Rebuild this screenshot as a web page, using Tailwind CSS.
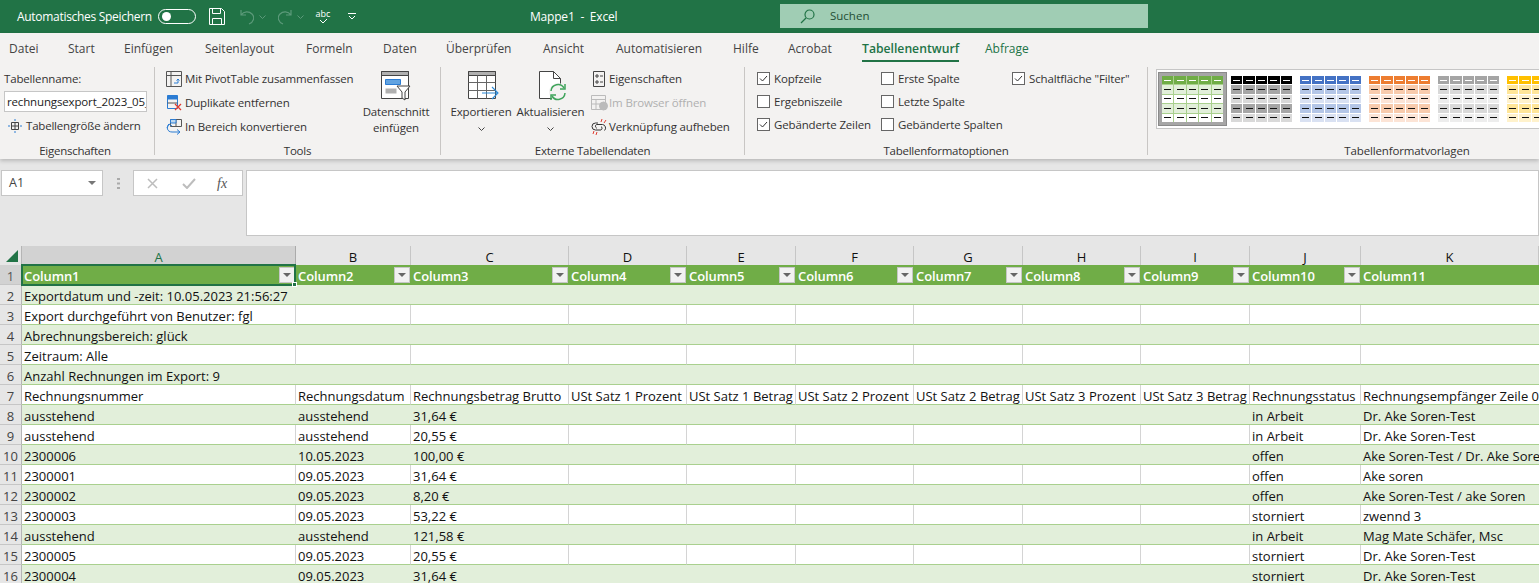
<!DOCTYPE html>
<html lang="de">
<head>
<meta charset="UTF-8">
<title>Mappe1 - Excel</title>
<script src="https://cdn.jsdelivr.net/npm/@tailwindcss/browser@4"></script>
</head>
<body class="w-[1539px] h-[583px] overflow-hidden bg-[#e6e6e6] font-['Open_Sans','Noto_Sans',sans-serif] text-[12px] text-[#333]">

<!-- title bar -->
<div class="h-[33px] bg-[#217346] flex items-center text-white relative">
  <span class="ml-[17px] w-[141px] text-[12px] tracking-[-0.3px]">Automatisches Speichern</span>
  <span class="w-[38px] h-[15px] rounded-full border border-white flex items-center pl-[3px]"><span class="w-[9px] h-[9px] rounded-full bg-white"></span></span>
  <svg class="ml-[13px]" width="16" height="17" viewBox="0 0 16 17" fill="none" stroke="#fff" stroke-width="1"><path d="M.5.5h12l3 3v13H.5zM3.5.5v5h8v-5M3.5 16.5v-6h9v6"/></svg>
  <svg class="ml-[15px]" width="14" height="16" viewBox="0 0 14 16" fill="none" stroke="#5c9a7a" stroke-width="1.2"><path d="M1 1v5h5M1 6c3-4 8-4 11-1s2 8-3 10"/></svg>
  <svg class="ml-[5px]" width="7" height="4" viewBox="0 0 7 4" fill="none" stroke="#5c9a7a"><path d="M.5.5l3 3 3-3"/></svg>
  <svg class="ml-[12px]" width="14" height="16" viewBox="0 0 14 16" fill="none" stroke="#5c9a7a" stroke-width="1.2"><path d="M13 1v5H8M13 6C10 2 5 2 2 5s-2 8 3 10"/></svg>
  <svg class="ml-[5px]" width="7" height="4" viewBox="0 0 7 4" fill="none" stroke="#5c9a7a"><path d="M.5.5l3 3 3-3"/></svg>
  <span class="ml-[11px] w-[16px] flex flex-col items-center leading-[9px] text-[9px]">abc<svg width="9" height="6" viewBox="0 0 9 6" fill="none" stroke="#fff"><path d="M1 2l3 3 4-4"/></svg></span>
  <svg class="ml-[17px]" width="8" height="7" viewBox="0 0 8 7" fill="none" stroke="#fff"><path d="M0 .5h8"/><path d="M1 3l3 3 3-3"/></svg>
  <span class="absolute left-[530px] top-[8px] text-[12px] tracking-[-0.2px]">Mappe1&nbsp; - &nbsp;Excel</span>
  <div class="absolute left-[780px] top-[4px] w-[368px] h-[24px] bg-[#a0cdb4] flex items-center text-[#1f4f35]">
    <svg class="ml-[20px]" width="15" height="15" viewBox="0 0 15 15" fill="none" stroke="#217346" stroke-width="1.2"><circle cx="9.5" cy="5.5" r="4.5"/><path d="M6 9L1 14"/></svg>
    <span class="ml-[15px] text-[11.5px]">Suchen</span>
  </div>
</div>

<!-- ribbon -->
<div class="bg-[#f3f2f1] h-[126px] shadow-[0_2px_4px_rgba(0,0,0,0.2)] relative">
  <div class="flex h-[32px] items-center text-[#444]">
    <span class="w-[68px] pl-[9px]">Datei</span>
    <span class="w-[56px]">Start</span>
    <span class="w-[81px]">Einfügen</span>
    <span class="w-[101px]">Seitenlayout</span>
    <span class="w-[77px]">Formeln</span>
    <span class="w-[63px]">Daten</span>
    <span class="w-[97px]">Überprüfen</span>
    <span class="w-[73px]">Ansicht</span>
    <span class="w-[117px]">Automatisieren</span>
    <span class="w-[55px]">Hilfe</span>
    <span class="w-[74px]">Acrobat</span>
    <span class="w-[123px] h-[32px] flex flex-col items-start justify-center relative"><span class="font-semibold text-[#217346] text-[12.2px]">Tabellenentwurf</span><span class="absolute left-0 top-[27px] w-[97px] h-[2px] bg-[#217346]"></span></span>
    <span class="text-[#217346]">Abfrage</span>
  </div>

  <div class="flex h-[93px] text-[11.5px] tracking-[-0.15px] whitespace-nowrap">
    <!-- Eigenschaften -->
    <div class="w-[155px] flex flex-col">
      <div class="h-[74px] mt-[2px] pl-[4px] border-r border-[#c8c6c4]">
        <div class="h-[24px] flex items-center">Tabellenname:</div>
        <div class="w-[143px] h-[21px] bg-white border border-[#c6c6c6] flex items-center pl-[2px] overflow-hidden text-[#222]">rechnungsexport_2023_05_</div>
        <div class="h-[27px] flex items-center pl-[4px]">
          <svg width="14" height="14" viewBox="0 0 14 14" fill="none" stroke="#444"><path d="M3.5 3.5h7v7h-7zM3.5 7h7M7 3.5v7"/><path d="M7 0v2M7 12v2M0 7h2M12 7h2" stroke="#2b7cd3"/></svg>
          <span class="ml-[4px] tracking-[-0.2px]">Tabellengröße ändern</span>
        </div>
      </div>
      <div class="flex-1 min-h-0 flex justify-center border-r border-[#c8c6c4] mb-[3px] leading-[15px] pt-[2px] pr-[4px] tracking-[-0.25px]">Eigenschaften</div>
    </div>
    <!-- Tools -->
    <div class="w-[286px] flex flex-col">
      <div class="h-[74px] mt-[2px] flex border-r border-[#c8c6c4]">
        <div class="w-[201px] pl-[11px]">
          <div class="h-[24px] flex items-center gap-[3px]">
            <svg width="16" height="16" viewBox="0 0 16 16" fill="none" stroke="#555"><path d="M.5.5h15v15H.5zM.5 4.5h15M5 .5v15"/><path d="M8 12h4V8M10.5 9.5L12 8l1.5 1.5" stroke="#2b7cd3"/></svg>
            <span>Mit PivotTable zusammenfassen</span>
          </div>
          <div class="h-[24px] flex items-center gap-[3px]">
            <svg width="16" height="16" viewBox="0 0 16 16" fill="none"><path d="M1.5.5h10v13h-10z" stroke="#2b7cd3"/><path d="M1.5.5h10v4h-10z" fill="#2b7cd3"/><path d="M1.5 8h10" stroke="#555"/><path d="M9 9l6 6M15 9l-6 6" stroke="#e03c31" stroke-width="1.3"/></svg>
            <span>Duplikate entfernen</span>
          </div>
          <div class="h-[24px] flex items-center gap-[3px]">
            <svg width="16" height="16" viewBox="0 0 16 16" fill="none"><path d="M4.5.5h11v7h-11zM10 .5v7" stroke="#555"/><path d="M4.5.5H10v3.500H4.500z" fill="#bcd6ee" stroke="#2b7cd3"/><path d="M3 5C0 8 1 13 6 13h8M11 10.500l3 2.500-3 2.500M1 9l2-4 3 2" stroke="#2b7cd3"/></svg>
            <span>In Bereich konvertieren</span>
          </div>
        </div>
        <div class="w-[80px] flex flex-col items-center pt-[4px]">
          <svg width="30" height="30" viewBox="0 0 30 30" fill="none"><path d="M.5.500h27v27H.5z" stroke="#444" fill="#fff"/><path d="M.5.500h27v4H.5z" fill="#b0b0b0" stroke="#444"/><path d="M4.500 8.500h15v5h-15z" fill="#62a3e0" stroke="#2b7cd3"/><path d="M4.500 17.500h11v5h-11z" fill="#b0b0b0"/><path d="M16 15h13l-5 6v8l-3-2v-6z" fill="#fff" stroke="#444"/></svg>
          <span class="mt-[3px] leading-[16px] text-center">Datenschnitt<br>einfügen</span>
        </div>
      </div>
      <div class="flex-1 min-h-0 flex justify-center border-r border-[#c8c6c4] mb-[3px] leading-[15px] pt-[2px] tracking-[-0.25px]">Tools</div>
    </div>
    <!-- Externe Tabellendaten -->
    <div class="w-[304px] flex flex-col">
      <div class="h-[74px] mt-[2px] flex border-r border-[#c8c6c4]">
        <div class="w-[74px] pl-[6px] flex flex-col items-center pt-[4px]">
          <svg class="ml-[4px]" width="31" height="30" viewBox="0 0 31 30" fill="none"><path d="M.5.500h27v27H.5z" stroke="#444" fill="#fff"/><path d="M.5.500h27v4H.5z" fill="#b0b0b0" stroke="#444"/><path d="M.5 11.500h27M.5 19.500h27M9.500 4.500v23M18.500 4.500v23" stroke="#666"/><path d="M14 22h15M24 16l6 6-6 6" stroke="#2b8ad8" stroke-width="1.1"/></svg>
          <span class="mt-[3px] leading-[16px]">Exportieren</span>
          <svg class="mt-[7px]" width="7" height="4" viewBox="0 0 7 4" fill="none" stroke="#444"><path d="M.5.500l3 3 3-3"/></svg>
        </div>
        <div class="w-[70px] flex flex-col items-center pt-[4px] pl-[1px]">
          <svg class="ml-[6px]" width="29" height="30" viewBox="0 0 29 30" fill="none"><path d="M.5.500h14l7 7v20H.5z" stroke="#444" fill="#fff"/><path d="M14.500.500v7h7" stroke="#444"/><circle cx="19" cy="21" r="9" fill="#f3f2f1"/><path d="M12 20a7 7 0 0 1 13-3M26 22a7 7 0 0 1-13 3" stroke="#3fa45b" stroke-width="1.500"/><path d="M26 13v5h-5M12 29v-5h5" stroke="#3fa45b" stroke-width="1.500"/></svg>
          <span class="mt-[3px] leading-[16px]">Aktualisieren</span>
          <svg class="mt-[7px]" width="7" height="4" viewBox="0 0 7 4" fill="none" stroke="#444"><path d="M.5.500l3 3 3-3"/></svg>
        </div>
        <div class="pl-[6px]">
          <div class="h-[24px] flex items-center"><svg class="ml-[2px]" width="12" height="16" viewBox="0 0 12 16" fill="none" stroke="#444"><path d="M.5.500h11v15H.5zM3 4h2v2H3zM3 10h2v2H3zM7 5h3M7 11h3"/></svg><span class="ml-[4px]">Eigenschaften</span></div>
          <div class="h-[24px] flex items-center text-[#b0b0b0]"><svg width="17" height="16" viewBox="0 0 17 16" fill="none" stroke="#bbb"><path d="M.5.500h14v14H.5zM.5 4.500h14M5 4.500v10M.5 9h9"/><circle cx="12.500" cy="11" r="4" fill="#bbb"/></svg><span class="ml-[1px]">Im Browser öffnen</span></div>
          <div class="h-[24px] flex items-center"><svg width="17" height="16" viewBox="0 0 17 16" fill="none"><path d="M7 4H4.500a3.500 3.500 0 0 0 0 7H10a2 2 0 0 0 0-3.500M6 9h-.5a2 2 0 0 1 0-3.500h6a3.500 3.500 0 0 1 2 6" stroke="#333"/><path d="M11 0l-1 3M15 1l-2 3M3 12l-1 3M6 13l-1 3" stroke="#e03c31"/></svg><span class="ml-[1px]">Verknüpfung aufheben</span></div>
        </div>
      </div>
      <div class="flex-1 min-h-0 flex justify-center border-r border-[#c8c6c4] mb-[3px] leading-[15px] pt-[2px] tracking-[-0.25px]">Externe Tabellendaten</div>
    </div>
    <!-- Tabellenformatoptionen -->
    <div class="w-[403px] flex flex-col">
      <div class="h-[74px] mt-[2px] flex border-r border-[#c8c6c4]">
        <div class="w-[136px] pl-[12px]">
          <label class="h-[23px] flex items-center gap-[4px]"><span class="w-[13px] h-[13px] border border-[#666] bg-white flex items-center justify-center"><svg width="9" height="7" viewBox="0 0 9 7" fill="none" stroke="#333"><path d="M1 3.500l2.500 2.500L8 1"/></svg></span>Kopfzeile</label>
          <label class="h-[23px] flex items-center gap-[4px]"><span class="w-[13px] h-[13px] border border-[#666] bg-white"></span>Ergebniszeile</label>
          <label class="h-[23px] flex items-center gap-[4px]"><span class="w-[13px] h-[13px] border border-[#666] bg-white flex items-center justify-center"><svg width="9" height="7" viewBox="0 0 9 7" fill="none" stroke="#333"><path d="M1 3.500l2.500 2.500L8 1"/></svg></span>Gebänderte Zeilen</label>
        </div>
        <div class="w-[131px]">
          <label class="h-[23px] flex items-center gap-[4px]"><span class="w-[13px] h-[13px] border border-[#666] bg-white"></span>Erste Spalte</label>
          <label class="h-[23px] flex items-center gap-[4px]"><span class="w-[13px] h-[13px] border border-[#666] bg-white"></span>Letzte Spalte</label>
          <label class="h-[23px] flex items-center gap-[4px]"><span class="w-[13px] h-[13px] border border-[#666] bg-white"></span>Gebänderte Spalten</label>
        </div>
        <div>
          <label class="h-[23px] flex items-center gap-[4px]"><span class="w-[13px] h-[13px] border border-[#666] bg-white flex items-center justify-center"><svg width="9" height="7" viewBox="0 0 9 7" fill="none" stroke="#333"><path d="M1 3.500l2.500 2.500L8 1"/></svg></span>Schaltfläche "Filter"</label>
        </div>
      </div>
      <div class="flex-1 min-h-0 flex justify-center border-r border-[#c8c6c4] mb-[3px] leading-[15px] pt-[2px] tracking-[-0.25px]">Tabellenformatoptionen</div>
    </div>
    <!-- Tabellenformatvorlagen -->
    <div class="flex-1 flex flex-col pl-[8px] overflow-hidden">
      <div class="h-[76px] pt-[4px]">
        <div id="gallery" class="h-[60px] bg-white border border-[#c6c6c6] border-r-0 flex items-center pl-[1px] w-[400px] overflow-hidden"></div>
      </div>
      <div class="flex justify-center w-[502px] shrink-0 leading-[15px] pt-[2px]">Tabellenformatvorlagen</div>
    </div>
  </div>
</div>

<!-- formula bar -->
<div class="flex h-[66px] mt-[11px]">
  <div class="ml-[1px] w-[102px] h-[26px] bg-white border border-[#c6c6c6] flex items-center justify-between pl-[7px] pr-[6px] text-[12.500px] text-[#444]">A1<span class="w-0 h-0 border-x-[4px] border-x-transparent border-t-[4px] border-t-[#777]"></span></div>
  <div class="w-[30px] h-[26px] flex items-center justify-center"><svg width="3" height="11" viewBox="0 0 3 11" fill="#aaa"><path d="M0 0h3v2H0zM0 4.500h3v2H0zM0 9h3v2H0z"/></svg></div>
  <div class="w-[110px] h-[26px] bg-white border border-[#c6c6c6] flex items-center">
    <svg class="ml-[13px]" width="11" height="11" viewBox="0 0 11 11" fill="none" stroke="#bdbdbd" stroke-width="1.500"><path d="M1 1l9 9M10 1l-9 9"/></svg>
    <svg class="ml-[24px]" width="14" height="11" viewBox="0 0 14 11" fill="none" stroke="#bdbdbd" stroke-width="2"><path d="M1 6l4 4 8-9"/></svg>
    <span class="ml-[21px] font-['Liberation_Serif',serif] italic text-[14px] text-[#555]">fx</span>
  </div>
  <div class="ml-[3px] flex-1 bg-white border border-[#c6c6c6]"></div>
</div>

<!-- sheet -->
<div class="mt-[10px] relative text-[13px] leading-[14px] text-[#111]" id="sheet"></div>

<script>
  const letters = ['A','B','C','D','E','F','G','H','I','J','K'];
  const gridCols = 'grid grid-cols-[22px_274px_115px_158px_118px_109px_118px_109px_118px_109px_111px_178px]';
  const sheet = document.getElementById('sheet');

  const rows = [
    ['Exportdatum und -zeit: 10.05.2023 21:56:27'],
    ['Export durchgeführt von Benutzer: fgl'],
    ['Abrechnungsbereich: glück'],
    ['Zeitraum: Alle'],
    ['Anzahl Rechnungen im Export: 9'],
    ['Rechnungsnummer','Rechnungsdatum','Rechnungsbetrag Brutto','USt Satz 1 Prozent','USt Satz 1 Betrag','USt Satz 2 Prozent','USt Satz 2 Betrag','USt Satz 3 Prozent','USt Satz 3 Betrag','Rechnungsstatus','Rechnungsempfänger Zeile 01'],
    ['ausstehend','ausstehend','31,64 €','','','','','','','in Arbeit','Dr. Ake Soren-Test'],
    ['ausstehend','ausstehend','20,55 €','','','','','','','in Arbeit','Dr. Ake Soren-Test'],
    ['2300006','10.05.2023','100,00 €','','','','','','','offen','Ake Soren-Test / Dr. Ake Soren'],
    ['2300001','09.05.2023','31,64 €','','','','','','','offen','Ake soren'],
    ['2300002','09.05.2023','8,20 €','','','','','','','offen','Ake Soren-Test / ake Soren'],
    ['2300003','09.05.2023','53,22 €','','','','','','','storniert','zwennd 3'],
    ['ausstehend','ausstehend','121,58 €','','','','','','','in Arbeit','Mag Mate Schäfer, Msc'],
    ['2300005','09.05.2023','20,55 €','','','','','','','storniert','Dr. Ake Soren-Test'],
    ['2300004','09.05.2023','31,64 €','','','','','','','storniert','Dr. Ake Soren-Test'],
  ];

  // column letters
  let html = '<div class="' + gridCols + ' h-[19px]">';
  html += '<div class="border-r border-[#b5b5b5] flex items-end justify-end pr-[3px] pb-[3px]"><span class="w-0 h-0 border-l-[12px] border-l-transparent border-b-[12px] border-b-[#217346]"></span></div>';
  letters.forEach((l, i) => {
    html += i === 0
      ? '<div class="bg-[#d2d2d2] text-[#217346] border-r border-[#ababab] flex items-center justify-center pt-[2px]">' + l + '</div>'
      : '<div class="border-r border-[#c6c6c6] flex items-center justify-center pt-[2px]">' + l + '</div>';
  });
  html += '</div>';

  // header row
  html += '<div class="' + gridCols + ' h-[20px] bg-[#70ad47]">';
  html += '<div class="bg-[#d2d2d2] text-[#555] border-r border-[#ababab] border-b border-b-[#c6c6c6] flex items-center justify-center pt-[3px]">1</div>';
  letters.forEach((l, i) => {
    const btn = i < 10 ? '<span class="absolute right-[1px] top-[2px] w-[16px] h-[16px] bg-[#f1f1f1] border border-[#c6c6c6] flex items-center justify-center"><span class="w-0 h-0 border-x-[4px] border-x-transparent border-t-[4px] border-t-[#666]"></span></span>' : '';
    html += '<div class="relative pl-[2px] pt-[3px] pb-[1px] font-semibold text-white flex items-center tracking-[-0.1px]">Column' + (i + 1) + btn + '</div>';
  });
  html += '</div>';

  rows.forEach((r, n) => {
    const band = n % 2 === 0;
    html += '<div class="' + gridCols + ' h-[20px] ' + (band ? 'bg-[#e2efda]' : 'bg-white') + '">';
    html += '<div class="bg-[#e6e6e6] text-[#444] border-r border-[#b5b5b5] border-b border-b-[#c6c6c6] flex items-center justify-center pt-[3px]">' + (n + 2) + '</div>';
    letters.forEach((l, i) => {
      const last = i === 10;
      const line = band || last ? 'border-b border-b-[#a9d08e]' : 'border-r border-r-[#d4d4d4] border-b border-b-[#a9d08e]';
      html += '<div class="' + line + ' pl-[2px] pt-[3px] whitespace-nowrap flex items-center ' + (last ? 'overflow-hidden' : '') + '">' + (r[i] || '') + '</div>';
    });
    html += '</div>';
  });

  // selected cell A1
  html += '<div class="absolute left-[21px] top-[18px] w-[275px] h-[22px] border-2 border-[#217346]"><span class="absolute right-[-3px] bottom-[-3px] w-[5px] h-[5px] bg-[#217346] border border-white"></span></div>';
  sheet.innerHTML = html;

  // table style gallery
  const swatches = [
    ['#70ad47','#e2efda','#ffffff','#a9d08e'],
    ['#000000','#a6a6a6','#d9d9d9','#ffffff'],
    ['#4472c4','#b4c6e7','#d9e1f2','#ffffff'],
    ['#ed7d31','#f8cbad','#fce4d6','#ffffff'],
    ['#a5a5a5','#d9d9d9','#ededed','#ffffff'],
    ['#ffc000','#ffe699','#fff2cc','#ffffff'],
  ];
  let g = '';
  swatches.forEach((s, i) => {
    let cells = '';
    for (let y = 0; y < 5; y++) {
      for (let x = 0; x < 5; x++) {
        const bg = y === 0 ? s[0] : (y % 2 === 1 ? s[1] : s[2]);
        const dash = y === 0 ? '#ffffff' : '#111111';
        cells += '<div class="flex items-center justify-center" style="background:' + bg + '"><span class="w-[7px] h-[1px]" style="background:' + dash + '"></span></div>';
      }
    }
    const wrap = i === 0
      ? 'w-[69px] h-[54px] bg-[#a6a6a6] border border-[#8a8a8a] flex items-center justify-center shrink-0'
      : 'w-[69px] h-[54px] flex items-center justify-center shrink-0';
    g += '<div class="' + wrap + '"><div class="grid grid-cols-5 grid-rows-5 gap-[1px] w-[61px] h-[46px]" style="background:' + s[3] + '">' + cells + '</div></div>';
  });
  document.getElementById('gallery').innerHTML = g;
</script>
</body>
</html>
